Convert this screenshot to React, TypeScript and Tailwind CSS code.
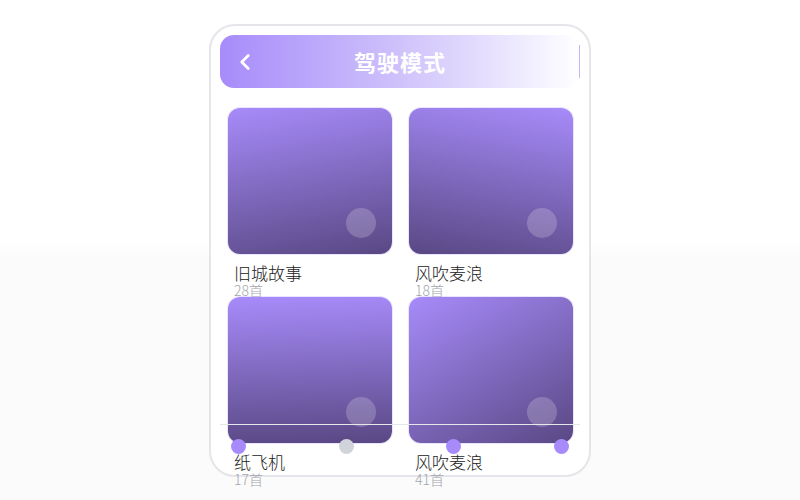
import { ChevronLeft } from 'lucide-react';

const albums = [
  { name: '旧城故事', count: '28首', bg: 'bg-linear-[170deg]' },
  { name: '风吹麦浪', count: '18首', bg: 'bg-linear-[190deg]' },
  { name: '纸飞机', count: '17首', bg: 'bg-linear-[178deg]' },
  { name: '风吹麦浪', count: '41首', bg: 'bg-linear-[150deg]' },
];

const dots = [true, false, true, true];

function AlbumCard({ name, count, bg }: { name: string; count: string; bg: string }) {
  return (
    <div className="flex flex-col">
      <div
        className={`relative h-[146px] rounded-[12px] ${bg} from-[#a78bfa] to-[#594884] shadow-[0_0_0_1px_rgba(196,181,253,0.35)]`}
      >
        <div className="absolute right-4 bottom-4 w-[30px] h-[30px] rounded-full bg-white/20" />
      </div>
      <div className="pl-[6px] pt-[9px] font-light">
        <div className="text-[17px] leading-[20px] text-[#222222]">{name}</div>
        <div className="text-[14px] leading-[14px] text-[#a3a6ad]">{count}</div>
      </div>
    </div>
  );
}

export default function App() {
  return (
    <div
      className="w-[800px] h-[500px] flex justify-center pt-[24px] bg-linear-to-b from-white from-48% to-[#fbfbfb] to-52%"
      style={{ fontFamily: '"Noto Sans CJK SC", "Noto Sans", sans-serif' }}
    >
      <div className="relative w-[382px] h-[453px] border-2 border-[#e5e5ea] rounded-[26px] bg-white p-[9px]">
        {/* Header */}
        <div className="relative h-[53px] rounded-[14px] bg-linear-to-r from-[#a78bfa] via-[#cfc2fb] to-white flex items-center">
          <ChevronLeft className="ml-[12px] w-[26px] h-[26px] text-white" strokeWidth={2.5} />
          <div className="absolute inset-0 flex items-center justify-center text-[22px] font-bold text-white tracking-[1px]">
            驾驶模式
          </div>
          <div className="absolute right-0 top-[10px] h-[33px] w-px bg-[#c4b5fd]" />
        </div>

        {/* Album grid */}
        <div className="mt-[20px] pl-2 grid grid-cols-[164px_164px] gap-x-[17px]">
          {albums.map((a, i) => (
            <AlbumCard key={i} name={a.name} count={a.count} bg={a.bg} />
          ))}
        </div>

        {/* Slider overlay */}
        <div className="absolute left-[9px] top-[398px] w-[360px] h-px bg-[#e5e7eb]" />
        <div className="absolute left-[20px] right-[20px] top-[413px] flex justify-between">
          {dots.map((on, i) => (
            <div
              key={i}
              className={`w-[15px] h-[15px] rounded-full ${on ? 'bg-[#a78bfa]' : 'bg-[#d1d5db]'}`}
            />
          ))}
        </div>
      </div>
    </div>
  );
}
